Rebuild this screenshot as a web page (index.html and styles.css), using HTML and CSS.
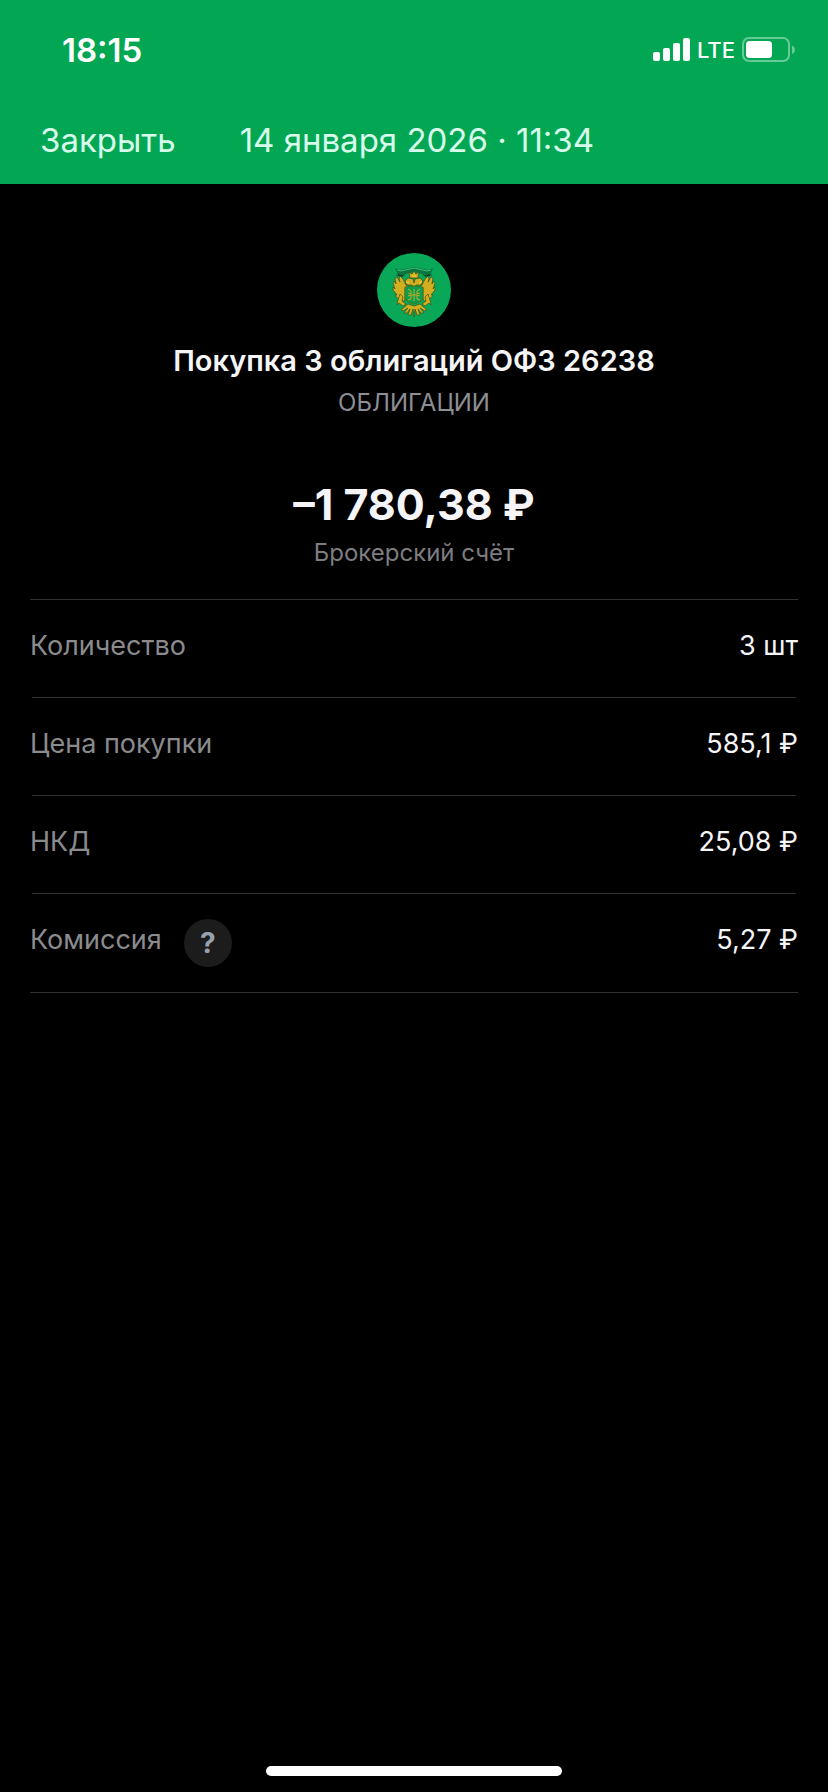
FILE: index.html
```html
<!DOCTYPE html>
<html lang="ru">
<head>
<meta charset="utf-8">
<meta name="viewport" content="width=device-width, initial-scale=1">
<title>Покупка 3 облигаций ОФЗ 26238</title>
<link rel="stylesheet" href="styles.css">
</head>
<body>
<div class="screen">
  <header class="header">
    <div class="status">
      <time class="status-time">18:15</time>
      <div class="status-icons">
        <svg class="signal" viewBox="0 0 37 24" aria-hidden="true">
          <rect x="0" y="14" width="7" height="9" rx="2"/>
          <rect x="10" y="10" width="7" height="13" rx="2"/>
          <rect x="20" y="5" width="7" height="18" rx="2"/>
          <rect x="30" y="0" width="7" height="23" rx="2"/>
        </svg>
        <span class="network">LTE</span>
        <svg class="battery" viewBox="0 0 54 26" aria-hidden="true">
          <rect class="battery-shell" x="1" y="1" width="46" height="23" rx="6"/>
          <rect x="4" y="4" width="26" height="17" rx="3.5"/>
          <path class="battery-tip" d="M50 8.500c4 1.500 4 7 0 8.500z"/>
        </svg>
      </div>
    </div>
    <nav class="nav">
      <button class="close" type="button">Закрыть</button>
      <span class="date">14 января 2026 · 11:34</span>
    </nav>
  </header>

  <main class="content">
    <section class="summary">
      <svg class="emblem" viewBox="13 13 74 74" role="img" aria-label="ОФЗ">
        <circle cx="50" cy="50" r="37" fill="#08a858"/>
        <path d="M31 28l5 2 14-3 14 3 5-2-2 5 1 3-7 1-3-3-8-2-8 2-3 3-7-1 1-3z" fill="#08763f"/>
        <path d="M33 30l4 1 13-3 13 3 4-1" fill="none" stroke="#47b878" stroke-width="1"/>
        <path d="M34 35l5 1M66 35l-5 1" stroke="#123f20" stroke-width="1.500"/>
        <g fill="#d3ae20" stroke="#38521b" stroke-width=".7" stroke-linejoin="round">
          <path d="M45 32l3 2 2-3 2 3 3-2-1 6h-8z"/>
          <path d="M42 45l-3-6-3-3-1 3 1 3-3-5-2 1 1 6-2-3-1 2 2 6-2-2v3l4 5-2 0 2 3 4 1 2 3 2-3V48l4-1z"/>
          <path d="M58 45l3-6 3-3 1 3-1 3 3-5 2 1-1 6 2-3 1 2-2 6 2-2v3l-4 5 2 0-2 3-4 1-2 3-2-3V48l-4-1z"/>
          <path d="M41 41l3-3 5 1 1 4 1-4 5-1 3 3-2 4-5 0-2 3-2-3-5 0z"/>
          <path d="M36 54l3 3-1 4 4 3-3 2-4-3-2 2 1-5zM64 54l-3 3 1 4-4 3 3 2 4-3 2 2-1-5z"/>
          <path d="M44 64l-7 6 2 1 5-3-4 5 3 0 3-4-2 6 3 0 2-6 1 8 1-8 2 6 3 0-2-6 3 4 3 0-4-5 5 3 2-1-7-6-6 2z"/>
        </g>
        <path d="M41 47l9-1 9 1v12l-4 3-5 2-5-2-4-3z" fill="#08a050" stroke="#48731f" stroke-width="1"/>
        <path d="M44 49l3 2v3l-3-1m0 3l3-1v4l-3 1M56 49l-3 2v3l3-1m0 3l-3-1v4l3 1M50 49v12M47 55h6" fill="none" stroke="#c6aa23" stroke-width="1"/>
        <path d="M48 36h4M42 42l3 1M58 42l-3 1" stroke="#f5d43e" stroke-width="1"/>
      </svg>
      <h1 class="title">Покупка 3 облигаций ОФЗ 26238</h1>
      <p class="category">ОБЛИГАЦИИ</p>
      <p class="amount">–1 780,38 ₽</p>
      <p class="account">Брокерский счёт</p>
    </section>

    <dl class="details">
      <div class="row"><dt>Количество</dt><dd>3 шт</dd></div>
      <div class="row"><dt>Цена покупки</dt><dd>585,1 ₽</dd></div>
      <div class="row"><dt>НКД</dt><dd>25,08 ₽</dd></div>
      <div class="row">
        <dt>Комиссия</dt>
        <dd class="hint"><button class="help" type="button" aria-label="О комиссии">?</button></dd>
        <dd>5,27 ₽</dd>
      </div>
    </dl>
  </main>

  <footer class="footer"><div class="home-indicator"></div></footer>
</div>
</body>
</html>
```
FILE: styles.css
```css
* {
  box-sizing: border-box;
}

body {
  margin: 0;
  background: #000;
  color: #f5f5f7;
  font-family: Inter, "Liberation Sans", sans-serif;
}

.screen {
  display: flex;
  flex-direction: column;
  min-height: 100vh;
}

.header {
  background: #03a753;
  color: #fff;
}

.status {
  display: flex;
  align-items: center;
  justify-content: space-between;
  height: 100px;
  padding: 0 32px 0 62px;
}

.status-time {
  font-size: 33px;
  font-weight: 600;
}

.status-icons {
  display: flex;
  align-items: center;
  gap: 7px;
  fill: #fff;
}

.signal {
  width: 37px;
  height: 24px;
}

.network {
  font-size: 22px;
  font-weight: 500;
}

.battery {
  width: 54px;
  height: 26px;
}

.battery-shell {
  fill: none;
  stroke: #67ca98;
  stroke-width: 2;
}

.battery-tip {
  fill: #67ca98;
}

.nav {
  display: flex;
  align-items: center;
  gap: 64px;
  height: 84px;
  padding: 0 40px 4px;
  color: #d8fceb;
  font-size: 33px;
}

.close,
.help {
  border: 0;
  padding: 0;
  font-family: inherit;
  cursor: pointer;
}

.close {
  background: none;
  color: inherit;
  font-size: inherit;
}

.content {
  flex: 1;
  padding: 69px 30px 0;
}

.summary {
  display: flex;
  flex-direction: column;
  align-items: center;
  padding-bottom: 32px;
  text-align: center;
}

.emblem {
  width: 74px;
  height: 74px;
}

.title {
  margin: 16px 0 0;
  font-size: 29px;
  font-weight: 600;
  line-height: 36px;
}

.category,
.account {
  margin: 10px 0 0;
  color: #8e8f94;
  font-size: 24px;
  line-height: 28px;
}

.account {
  color: #7d7d80;
}

.amount {
  margin: 63px 0 0;
  font-size: 43px;
  font-weight: 700;
  line-height: 49px;
}

.details {
  margin: 0;
  border-top: 1px solid #303132;
  border-bottom: 1px solid #303132;
  font-size: 27px;
}

.row {
  display: flex;
  align-items: center;
  height: 98px;
  padding-bottom: 8px;
  background: linear-gradient(#303132, #303132) center bottom / calc(100% - 4px) 1px no-repeat;
}

.row:last-child {
  background: none;
}

.row dt {
  color: #8b8b8e;
}

.row dd {
  margin: 0 0 0 auto;
}

.row .hint {
  display: flex;
  margin: 8px 0 0 22px;
}

.help {
  width: 48px;
  height: 48px;
  border-radius: 50%;
  background: #1c1c1d;
  color: #98a2ac;
  font-size: 28px;
  font-weight: 700;
}

.footer {
  display: flex;
  justify-content: center;
  padding-bottom: 16px;
}

.home-indicator {
  width: 296px;
  height: 10px;
  border-radius: 5px;
  background: #fff;
}
```
